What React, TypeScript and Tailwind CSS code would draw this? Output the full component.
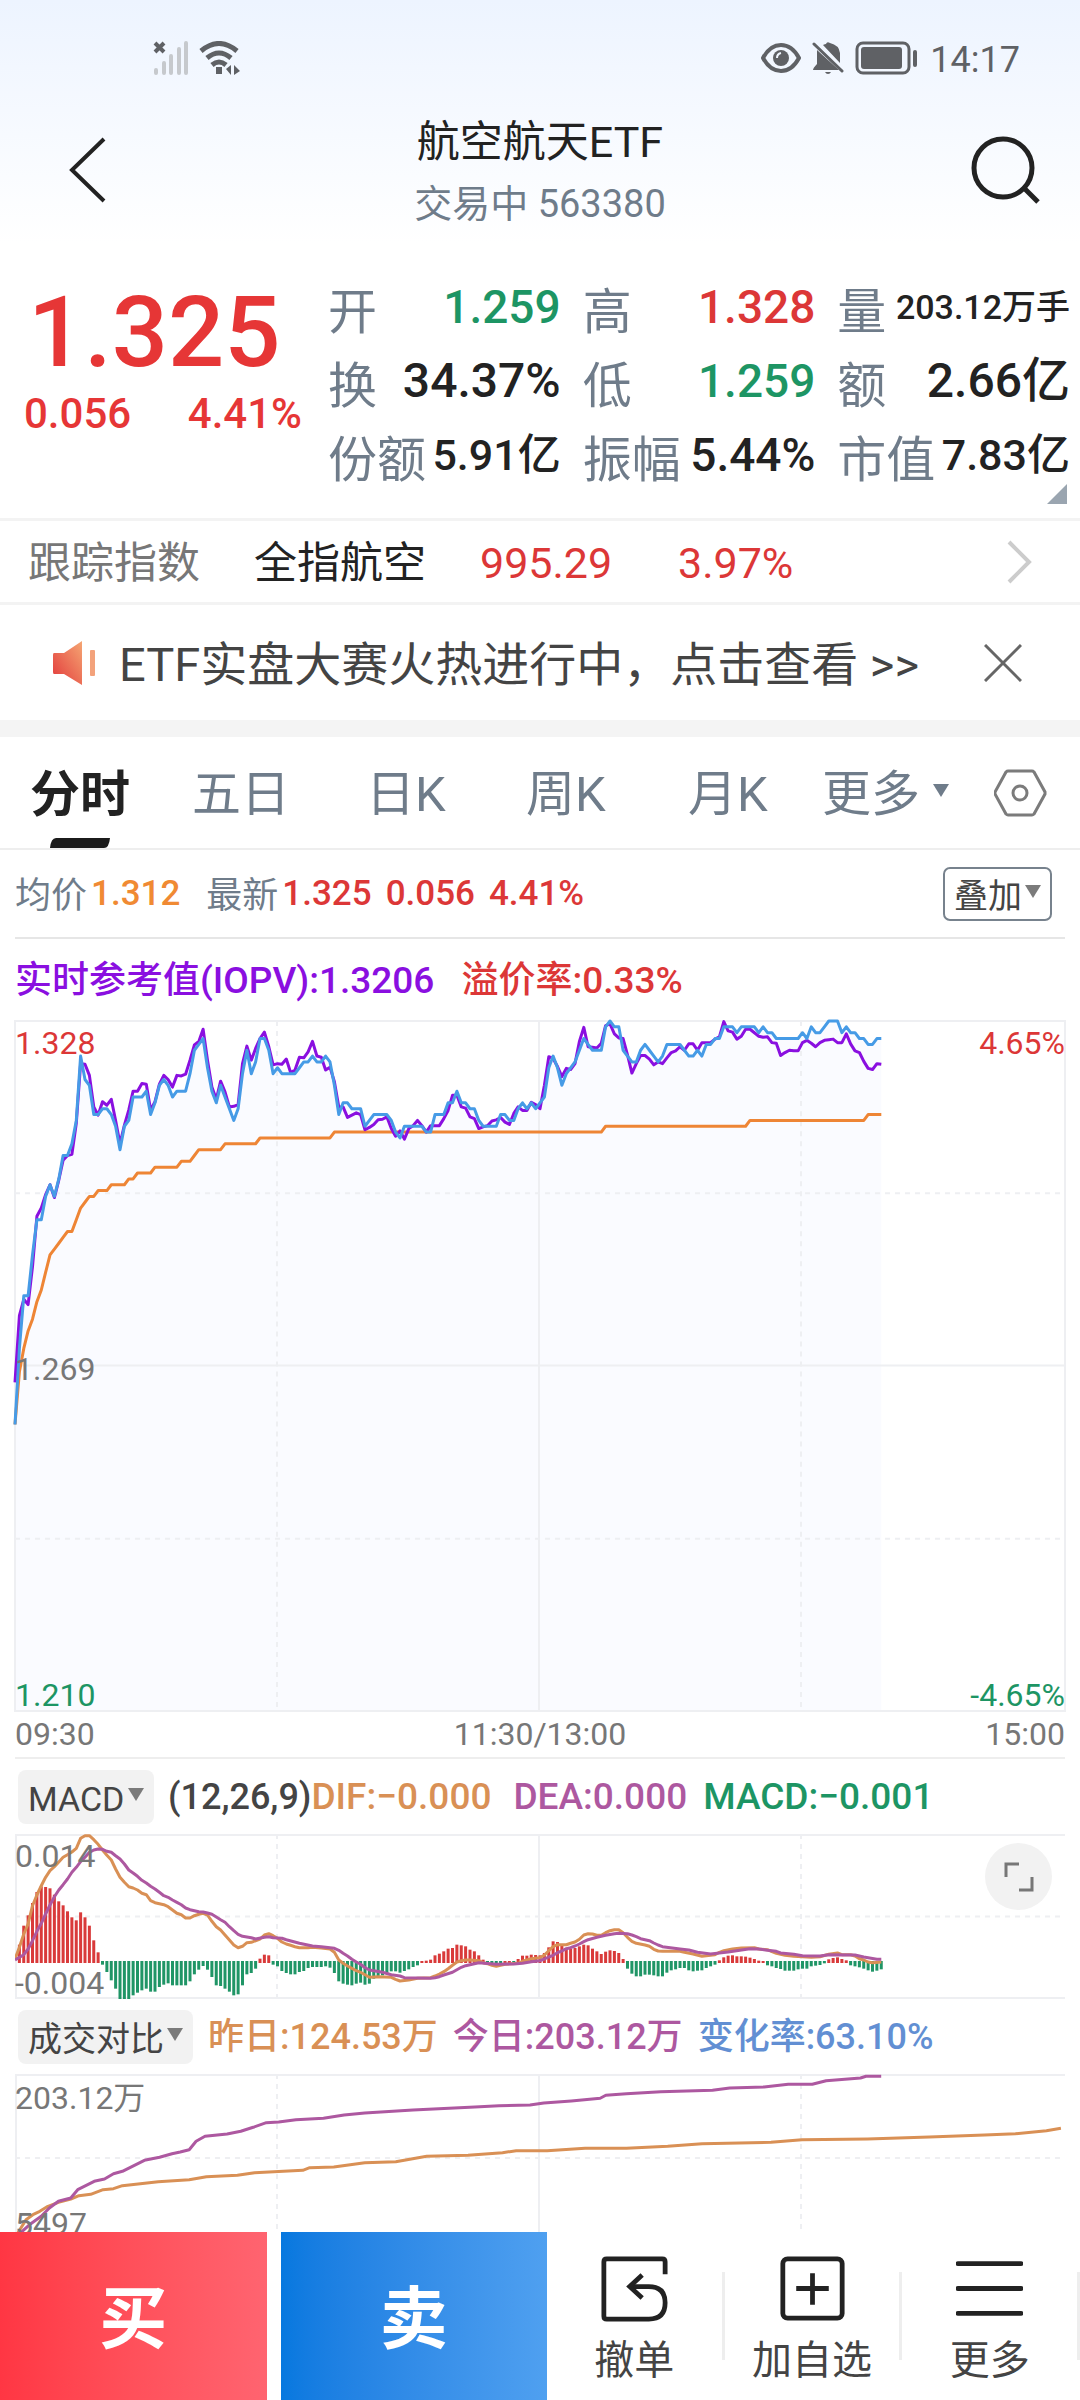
import type { ReactNode } from 'react'

type Point = [number, number]

const MINUTES = 240
const CHART_WIDTH = 1050

// Ticks of 0.001 below the day high (1.328), one entry per minute.
const priceTicks = [
  69, 56, 47, 47, 40, 34, 34, 30, 28, 30, 27, 23, 23, 21, 17, 6, 10, 11, 16, 16, 15, 15, 16, 18, 22, 18, 17, 13, 13, 13,
  12, 16, 14, 11, 10, 11, 13, 12, 12, 12, 9, 5, 4, 3, 8, 12, 14, 11, 13, 15, 17, 15, 9, 5, 9, 7, 3, 3, 5, 9, 8, 9, 9, 9,
  9, 8, 7, 7, 6, 7, 7, 6, 7, 11, 16, 14, 14, 15, 15, 15, 18, 17, 16, 16, 16, 16, 17, 19, 20, 18, 18, 18, 18, 18, 19, 19,
  16, 16, 16, 14, 14, 12, 14, 14, 15, 15, 17, 18, 18, 18, 18, 16, 16, 17, 17, 15, 14, 15, 14, 15, 14, 13, 8, 6, 8, 11,
  9, 8, 7, 5, 3, 4, 5, 5, 5, 1, 0, 1, 1, 5, 6, 7, 7, 5, 4, 5, 6, 7, 6, 4, 4, 4, 4, 5, 6, 6, 5, 6, 4, 4, 3, 3, 1, 1, 1,
  2, 1, 1, 1, 1, 2, 1, 2, 2, 3, 3, 3, 3, 3, 3, 2, 3, 1, 2, 2, 1, 0, 0, 0, 2, 1, 2, 2, 3, 3, 4, 4, 3, 3,
]

const iopvTicks = [
  61.8, 50.4, 47.6, 48.5, 42, 33.4, 32, 29.7, 28, 30.2, 27.2, 23.8, 23, 22.8, 17.5, 7.3, 7.4, 9.3, 14.7, 16.1, 13.8,
  14.4, 13.4, 17, 21, 17.8, 15.2, 12, 12, 10.7, 10.8, 15.2, 13.8, 10.8, 9.3, 10, 11.3, 9.3, 9.4, 9.1, 6.7, 4.1, 3.5,
  1.4, 6.7, 11.3, 13.4, 10.3, 12.1, 14.7, 14.6, 14.3, 7.3, 4.3, 6.7, 4.7, 3, 1.9, 4.4, 7.5, 7.3, 7.4, 6.5, 8.8, 8.4,
  6.2, 6.3, 5.3, 3.5, 6, 6.2, 8.4, 7.9, 10.4, 14.7, 14.7, 16.5, 16.1, 15.7, 16, 18.6, 18.2, 17.7, 16.9, 16.8, 16.4,
  18.4, 19.7, 18.8, 20.2, 18.4, 17.9, 17, 17.9, 19, 17.9, 17.9, 17.9, 16.7, 15.3, 12.7, 12.7, 14.7, 14.9, 16.4, 16.7,
  18.4, 18.1, 17.9, 17.1, 16.9, 16.5, 17.3, 17.7, 15.8, 14.7, 15.3, 15.3, 13.9, 14.3, 15, 11, 6.1, 6.4, 7.8, 9.5, 8.1,
  8.3, 7.3, 3.5, 1.1, 4.4, 4.5, 4.6, 3.8, 0.8, 0.5, 2.2, 2.9, 3, 5.8, 8.9, 7.3, 5.9, 5.9, 6.5, 7.5, 7, 7.3, 6.3, 5.4,
  5.1, 4.4, 5, 3.9, 3.9, 5, 3.7, 3.7, 3.7, 3.1, 2.7, 0.1, 1.7, 1.9, 3.1, 2.6, 1.4, 1.4, 2, 2.6, 2.8, 2.7, 3.7, 3.8,
  5.9, 5.4, 5, 5.1, 5.1, 3.7, 3.3, 3.8, 4.4, 3.7, 3.3, 3.2, 3.1, 3.7, 3.7, 2.2, 3.9, 5.1, 5.4, 6.9, 8.1, 8.3, 7.3, 7.4,
]

// [minute, ticks below the high]
const averageTicks: Point[] = [
  [0, 69], [1, 60], [2, 56], [3, 53], [4, 51], [5, 48], [6, 46], [7, 43], [8, 40], [9, 39], [10, 38], [11, 37],
  [12, 36], [13, 36], [14, 34], [15, 32], [16, 31], [17, 30], [18, 30], [19, 29], [21, 29], [22, 28], [25, 28],
  [26, 27], [27, 27], [28, 26], [31, 26], [32, 25], [37, 25], [38, 24], [40, 24], [41, 23], [42, 22], [47, 22],
  [48, 21], [55, 21], [56, 20], [72, 20], [73, 19], [134, 19], [135, 18], [167, 18], [168, 17], [194, 17], [195, 16],
  [198, 16],
]

// MACD bars from minute 1, positive above the zero line. Plot height is 495.
const macdBars = [
  55, 112, 143, 180, 213, 230, 228, 224, 205, 185, 173, 155, 137, 128, 152, 137, 112, 68, 32, -11, -33, -58, -83, -115,
  -118, -118, -103, -95, -88, -83, -92, -92, -78, -71, -67, -73, -73, -73, -73, -61, -40, -26, -15, -26, -48, -73, -75,
  -83, -92, -103, -100, -73, -40, -36, -23, 13, 25, 23, -11, -16, -30, -36, -40, -40, -33, -30, -21, -18, -18, -18, -16,
  -20, -36, -61, -68, -71, -73, -68, -65, -71, -68, -53, -48, -43, -38, -31, -31, -35, -30, -25, -18, -13, 6, 7, 10, 23,
  28, 35, 43, 45, 55, 53, 50, 40, 35, 23, 10, -4, -6, -7, -7, 6, 6, -4, 12, 22, 22, 25, 24, 23, 30, 47, 65, 63, 52, 45,
  43, 45, 50, 55, 53, 43, 35, 27, 34, 38, 36, 30, 12, -23, -38, -46, -46, -41, -41, -43, -46, -46, -35, -28, -25, -21,
  -21, -28, -31, -29, -28, -21, -16, -11, 8, 17, 22, 23, 20, 20, 19, 16, 12, 7, 6, -13, -16, -21, -24, -29, -29, -29,
  -25, -23, -23, -16, -14, -12, -7, 11, 15, 17, 12, 8, -13, -16, -19, -23, -28, -32, -29, -25,
]

const difLine: Point[] = [
  [0, 375], [1, 340], [2, 300], [3, 270], [4, 215], [5, 183], [6, 155], [7, 130], [8, 110], [9, 98], [10, 84], [11, 70],
  [12, 62], [13, 54], [14, 43], [15, 13], [16, 5], [17, 5], [18, 17], [19, 31], [20, 48], [21, 64], [22, 78], [23, 105],
  [24, 130], [25, 145], [26, 158], [27, 162], [28, 168], [29, 178], [30, 182], [31, 200], [32, 206], [34, 212],
  [35, 218], [36, 228], [37, 238], [38, 242], [39, 252], [40, 252], [41, 245], [42, 241], [43, 238], [44, 243],
  [45, 262], [46, 278], [47, 288], [48, 303], [49, 318], [50, 333], [51, 341], [52, 337], [53, 326], [54, 325],
  [56, 315], [57, 303], [58, 299], [59, 305], [60, 313], [61, 324], [62, 330], [63, 334], [64, 338], [65, 341],
  [67, 341], [68, 340], [70, 342], [72, 345], [73, 355], [74, 378], [75, 388], [76, 396], [77, 403], [78, 410],
  [79, 415], [80, 422], [81, 430], [83, 428], [86, 430], [87, 436], [88, 441], [90, 438], [92, 433], [95, 431],
  [96, 426], [97, 420], [98, 413], [99, 404], [100, 394], [101, 384], [102, 380], [103, 378], [104, 378], [106, 380],
  [107, 386], [108, 389], [109, 394], [110, 397], [111, 394], [112, 391], [115, 388], [116, 382], [117, 378],
  [118, 374], [120, 371], [121, 363], [122, 350], [123, 338], [124, 332], [126, 332], [127, 328], [128, 324],
  [129, 316], [130, 303], [131, 299], [132, 300], [133, 304], [134, 304], [135, 296], [136, 290], [137, 287],
  [138, 287], [139, 296], [140, 310], [141, 322], [142, 328], [144, 333], [145, 337], [146, 346], [147, 351],
  [148, 352], [152, 352], [153, 355], [155, 360], [157, 367], [160, 362], [161, 355], [162, 350], [164, 345],
  [166, 342], [169, 341], [170, 345], [172, 347], [173, 353], [174, 358], [176, 364], [178, 367], [182, 370],
  [184, 368], [186, 361], [188, 357], [189, 362], [191, 362], [192, 366], [193, 374], [194, 378], [195, 384],
  [196, 386], [198, 384],
]

const deaLine: Point[] = [
  [0, 378], [2, 362], [3, 345], [4, 320], [5, 292], [6, 268], [7, 240], [8, 213], [9, 188], [10, 168], [11, 152],
  [12, 135], [13, 115], [14, 100], [15, 83], [16, 70], [17, 55], [18, 48], [19, 45], [20, 46], [21, 52], [22, 55],
  [23, 65], [24, 75], [25, 90], [26, 108], [27, 117], [28, 127], [29, 139], [30, 147], [31, 157], [32, 165], [33, 175],
  [34, 185], [35, 190], [36, 198], [37, 205], [38, 212], [39, 222], [40, 227], [42, 233], [43, 234], [44, 237],
  [45, 241], [46, 249], [47, 257], [48, 265], [49, 278], [50, 290], [51, 301], [52, 307], [54, 311], [55, 315],
  [57, 310], [58, 308], [59, 311], [61, 313], [62, 317], [65, 328], [68, 336], [70, 338], [73, 343], [74, 349],
  [75, 358], [76, 366], [77, 376], [78, 384], [79, 391], [80, 401], [81, 408], [84, 415], [86, 422], [88, 426],
  [89, 431], [95, 433], [96, 431], [97, 428], [98, 423], [100, 415], [101, 407], [102, 400], [103, 395], [105, 389],
  [106, 386], [110, 391], [114, 390], [116, 388], [118, 383], [120, 380], [121, 375], [122, 369], [123, 364],
  [124, 356], [125, 351], [126, 344], [127, 341], [128, 336], [129, 330], [130, 323], [131, 317], [133, 310],
  [135, 304], [137, 299], [138, 298], [140, 299], [141, 303], [142, 308], [143, 314], [145, 320], [146, 327],
  [147, 333], [148, 338], [152, 345], [154, 348], [156, 355], [159, 360], [163, 354], [168, 344], [170, 345],
  [172, 349], [174, 352], [175, 357], [178, 361], [180, 365], [184, 366], [186, 362], [192, 363], [194, 369],
  [197, 376], [198, 376],
]

// Cumulative volume, x on a 0-1525 scale and y on a 0-504 scale.
const todayVolume: Point[] = [
  [4, 484], [23, 449], [38, 427], [50, 402], [63, 382], [81, 372], [91, 347], [115, 322], [130, 315], [143, 299],
  [156, 292], [188, 259], [210, 250], [228, 239], [240, 234], [253, 227], [263, 202], [276, 187], [308, 180],
  [328, 172], [346, 160], [365, 146], [383, 144], [408, 137], [448, 133], [478, 123], [508, 117], [578, 108],
  [668, 99], [703, 95], [748, 93], [768, 87], [808, 81], [850, 73], [858, 64], [888, 59], [938, 53], [1013, 49],
  [1038, 42], [1088, 39], [1123, 31], [1158, 31], [1178, 20], [1228, 12], [1236, 7], [1258, 7],
]

const yesterdayVolume: Point[] = [
  [2, 484], [16, 437], [26, 422], [36, 412], [46, 399], [63, 385], [81, 375], [93, 365], [110, 361], [128, 347],
  [143, 344], [156, 335], [208, 323], [253, 317], [278, 308], [323, 304], [348, 296], [418, 289], [428, 281],
  [463, 279], [508, 266], [553, 263], [598, 247], [658, 244], [708, 236], [728, 230], [773, 230], [828, 223],
  [888, 223], [948, 217], [998, 209], [1098, 205], [1143, 197], [1238, 195], [1328, 189], [1408, 183], [1453, 179],
  [1498, 170], [1519, 163],
]

const PRICE_HEIGHT = 689
const TICK = PRICE_HEIGHT / 118

function toPoints(data: Point[], xMax: number, yUnit: number) {
  return data.map(([x, y]) => `${((x / xMax) * CHART_WIDTH).toFixed(1)},${(y * yUnit).toFixed(1)}`).join(' ')
}

function perMinute(values: number[]): Point[] {
  return values.map((value, minute) => [minute, value])
}

const quotes = [
  { label: '开', value: '1.259', className: 'text-[46px] text-[#1d9564]' },
  { label: '高', value: '1.328', className: 'text-[46px] text-[#dc3737]' },
  { label: '量', value: '203.12万手', className: 'text-[34px] text-[#222]' },
  { label: '换', value: '34.37%', className: 'text-[48px] text-[#222]' },
  { label: '低', value: '1.259', className: 'text-[46px] text-[#1d9564]' },
  { label: '额', value: '2.66亿', className: 'text-[48px] text-[#222]' },
  { label: '份额', value: '5.91亿', className: 'text-[43px] text-[#222]' },
  { label: '振幅', value: '5.44%', className: 'text-[46px] text-[#222]' },
  { label: '市值', value: '7.83亿', className: 'text-[43px] text-[#222]' },
]

function StatusBar() {
  return (
    <div className="flex h-[116px] items-center justify-between pr-[60px] pl-[153px] text-[#5f6165]">
      <div className="flex items-center gap-[10px]">
        <svg width="36" height="34" viewBox="0 0 36 34" fill="none" strokeLinecap="round">
          <path d="M2 2l9 9M11 2l-9 9" stroke="#5f6165" strokeWidth="4" strokeLinecap="butt" />
          <path d="M3 29v3M11 22v10M18 15v17M26 8v24M33 2v30" stroke="#c6c9cd" strokeWidth="4" />
        </svg>
        <svg width="42" height="34" viewBox="0 0 42 34" fill="none" stroke="currentColor" strokeWidth="5">
          <path d="M2 10Q20-5 38 10M8 17q12-10 24 0M13 24q7-6 14 0" />
          <path d="M20 26v7" strokeWidth="6" />
          <path d="M32 24v10l-5-6zM35 34V24l6 6z" fill="currentColor" stroke="none" />
        </svg>
      </div>
      <div className="flex items-center gap-[11px]">
        <svg width="40" height="34" viewBox="0 0 40 34" fill="none" stroke="currentColor">
          <path d="M2 17Q9 4 20 4t18 13Q31 30 20 30T2 17z" strokeWidth="4" strokeLinejoin="round" />
          <circle cx="20" cy="17" r="8" fill="currentColor" stroke="none" />
          <path d="M16 17q0-4 4-5" stroke="#f0f6ff" strokeWidth="2" />
        </svg>
        <svg width="32" height="34" viewBox="0 0 32 34" fill="currentColor">
          <path d="M5 9l22 20H1q0-2 4-6zM11 4q2-1 3-1 1-3 4-1 9 2 10 10v10zM13 31h6q-1 2-3 2t-3-2z" />
          <path d="M2 3l28 27" stroke="currentColor" strokeWidth="3" strokeLinecap="round" />
        </svg>
        <svg width="64" height="34" viewBox="0 0 64 34" fill="none" stroke="currentColor">
          <rect x="2" y="2" width="52" height="30" rx="6" strokeWidth="3" />
          <rect x="6" y="6" width="41" height="22" rx="3" fill="currentColor" stroke="none" />
          <path d="M60 11v13" strokeWidth="4" strokeLinecap="round" />
        </svg>
        <span className="pt-1 text-[36px] leading-none">14:17</span>
      </div>
    </div>
  )
}

function Header() {
  return (
    <header className="flex h-[108px] items-center justify-between px-10">
      <button type="button" aria-label="返回" className="flex h-[100px] w-[72px] items-center justify-end">
        <svg width="44" height="68" viewBox="0 0 44 68" fill="none" stroke="#222" strokeWidth="4">
          <path d="M36 3L4 34l32 31" />
        </svg>
      </button>
      <div className="flex flex-col items-center gap-[20px] pt-1">
        <h1 className="text-[43px] leading-[44px] text-[#222]">航空航天ETF</h1>
        <p className="text-[38px] leading-[40px] text-[#6f7c8a]">交易中 563380</p>
      </div>
      <button type="button" aria-label="搜索" className="flex h-[100px] w-[72px] items-center justify-center">
        <svg width="72" height="68" viewBox="0 0 72 68" fill="none" stroke="#222" strokeWidth="5">
          <circle cx="35" cy="32" r="29" />
          <path d="M56 52l14 14" />
        </svg>
      </button>
    </header>
  )
}

function Quote() {
  return (
    <section className="relative flex h-[274px] pt-[28px] pr-[10px]">
      <div className="w-[328px] pl-[24px] font-medium text-[#e63636]">
        <div className="pl-[4px] text-[99px] leading-[120px]">1.325</div>
        <div className="flex w-[278px] justify-between text-[42px] leading-[44px]">
          <span>0.056</span>
          <span>4.41%</span>
        </div>
      </div>
      <dl className="grid flex-1 auto-rows-[74px] grid-cols-3 gap-x-[22px]">
        {quotes.map((item) => (
          <div key={item.label} className="flex items-center justify-between whitespace-nowrap">
            <dt className="pt-2 text-[49px] leading-[66px] text-[#6f7c8a]">{item.label}</dt>
            <dd className={`pb-1 leading-none font-medium ${item.className}`}>{item.value}</dd>
          </div>
        ))}
      </dl>
      <svg className="absolute right-[13px] bottom-[14px]" width="20" height="20" viewBox="0 0 20 20">
        <path d="M20 0v20H0z" fill="#9aa5b0" />
      </svg>
    </section>
  )
}

function TrackingIndex() {
  return (
    <a
      href="#index"
      className="flex h-[87px] items-center border-y-[3px] border-[#f3f3f3] pr-[48px] pl-[28px] text-[43px] text-[#dc3737]"
    >
      <span className="w-[226px] pt-1 text-[#777]">跟踪指数</span>
      <span className="w-[226px] pt-1 text-[#222]">全指航空</span>
      <span className="w-[198px] pt-1">995.29</span>
      <span className="pt-1">3.97%</span>
      <svg className="ml-auto" width="26" height="44" viewBox="0 0 26 44" fill="none" stroke="#ccc" strokeWidth="4">
        <path d="M3 2l20 20L3 42" />
      </svg>
    </a>
  )
}

function Banner() {
  return (
    <div className="flex h-[115px] items-center pr-[54px] pl-[52px]">
      <svg width="44" height="44" viewBox="0 0 44 44">
        <defs>
          <linearGradient id="horn" x1="0" y1="1" x2="1" y2="0">
            <stop offset="0" stopColor="#e2383a" />
            <stop offset="1" stopColor="#f5a673" />
          </linearGradient>
        </defs>
        <path d="M2 12h10L30 0v44L12 33H2q-1 0-1-2V14q0-2 1-2z" fill="url(#horn)" />
        <rect x="38" y="9" width="5" height="26" rx="1" fill="#f3a27b" />
      </svg>
      <a href="#contest" className="ml-[23px] pt-1 text-[47px] whitespace-nowrap text-[#444]">
        ETF实盘大赛火热进行中，点击查看 &gt;&gt;
      </a>
      <button type="button" aria-label="关闭" className="ml-auto p-1">
        <svg width="38" height="38" viewBox="0 0 38 38" fill="none" stroke="#666" strokeWidth="3">
          <path d="M1 1l36 36M37 1L1 37" />
        </svg>
      </button>
    </div>
  )
}

function Triangle({ className }: { className: string }) {
  return (
    <svg className={className} width="16" height="13" viewBox="0 0 16 13" fill="currentColor">
      <path d="M0 0h16L8 13z" />
    </svg>
  )
}

function Tabs() {
  return (
    <nav className="relative flex h-[113px] items-center border-b-2 border-[#eee] px-[30px] text-[49px] text-[#6f7c8a]">
      <button type="button" className="w-[162px] pt-1 text-left text-[50px] font-bold text-[#222]">
        分时
      </button>
      <button type="button" className="w-[174px] pt-1 text-left">五日</button>
      <button type="button" className="w-[160px] pt-1 text-left">日K</button>
      <button type="button" className="w-[162px] pt-1 text-left">周K</button>
      <button type="button" className="w-[134px] pt-1 text-left">月K</button>
      <div className="flex items-center">
        <select aria-label="更多周期" className="appearance-none pt-1 leading-[72px]">
          <option>更多</option>
        </select>
        <Triangle className="mb-1 ml-[12px]" />
      </div>
      <button type="button" aria-label="图表设置" className="ml-auto">
        <svg width="56" height="50" viewBox="0 0 56 50" fill="none" stroke="#7b7b7b" strokeWidth="3">
          <path d="M14 3h24q1 0 2 1l11 20v2L40 46q-1 1-2 1H14q-1 0-2-1L1 26v-2L12 4q1-1 2-1z" />
          <circle cx="26" cy="25" r="7" />
        </svg>
      </button>
      <svg className="absolute bottom-0 left-[50px]" width="60" height="10" viewBox="0 0 60 10">
        <path d="M6 0h54q-1 10-6 10H0q1-10 6-10z" fill="#1b1b1b" />
      </svg>
    </nav>
  )
}

function Averages() {
  return (
    <div className="mx-[15px] flex h-[89px] items-center border-b-2 border-[#e6e6e6] text-[35px] font-medium text-[#dc3737]">
      <span className="pt-1 text-[36px] font-normal text-[#6f7c8a]">均价</span>
      <span className="ml-[4px] text-[#f08a33]">1.312</span>
      <span className="ml-[26px] pt-1 text-[36px] font-normal text-[#6f7c8a]">最新</span>
      <span className="ml-[4px]">1.325</span>
      <span className="ml-[14px]">0.056</span>
      <span className="ml-[14px]">4.41%</span>
      <div className="mr-[13px] ml-auto flex h-[54px] items-center rounded-[7px] border-2 border-[#77828d] px-[9px] font-normal text-[#444]">
        <select aria-label="叠加" className="appearance-none pt-1 text-[34px] leading-[46px]">
          <option>叠加</option>
        </select>
        <Triangle className="mb-1 ml-[3px] text-[#7b7b7b]" />
      </div>
    </div>
  )
}

type ChartProps = {
  height: number
  className: string
  children: ReactNode
}

// Frame and grid lines shared by the two lower plots.
function Chart({ height, className, children }: ChartProps) {
  return (
    <svg className={`block w-full ${className}`} viewBox={`0 0 ${CHART_WIDTH} ${height}`} preserveAspectRatio="none" fill="none">
      <g stroke="#eeeff2" strokeWidth="2">
        <path d={`M1 0V${height}M524 0V${height}M0 1H${CHART_WIDTH}M0 ${height - 1}H${CHART_WIDTH}`} />
        <path d={`M262 0V${height}M786 0V${height}M0 ${height / 2}H${CHART_WIDTH}`} strokeDasharray="5 5" />
      </g>
      {children}
    </svg>
  )
}

function PriceChart() {
  const price = toPoints(perMinute(priceTicks), MINUTES, TICK)

  return (
    <div className="relative text-[32px] leading-none">
      <svg
        className="block h-[690px] w-full overflow-visible"
        viewBox={`0 0 ${CHART_WIDTH} ${PRICE_HEIGHT}`}
        preserveAspectRatio="none"
        fill="none"
      >
        <path d={`M${price.replaceAll(' ', 'L')}V${PRICE_HEIGHT}H0z`} fill="#fafbff" />
        <g stroke="#eeeff2" strokeWidth="2">
          <path d="M0 0H1050V689H0zM0 344H1050M524 0V689" />
          <path d="M262 0V689M786 0V689M0 172H1050M0 517H1050" strokeDasharray="5 5" />
        </g>
        <g strokeWidth="3" strokeLinejoin="round">
          <polyline points={toPoints(averageTicks, MINUTES, TICK)} stroke="#ee8535" />
          <polyline points={toPoints(perMinute(iopvTicks), MINUTES, TICK)} stroke="#8a0fe0" />
          <polyline points={price} stroke="#469be6" />
        </g>
      </svg>
      <span className="absolute top-[6px] left-0 text-[#dc3737]">1.328</span>
      <span className="absolute top-[6px] right-0 text-[#dc3737]">4.65%</span>
      <span className="absolute top-[332px] left-0 text-[#777]">1.269</span>
      <span className="absolute bottom-0 left-0 text-[#1d9564]">1.210</span>
      <span className="absolute right-0 bottom-0 text-[#1d9564]">-4.65%</span>
    </div>
  )
}

function IndicatorSelect({ name }: { name: string }) {
  return (
    <div className="flex h-[54px] items-center rounded-lg bg-[#f2f2f2] px-[10px] text-[#444]">
      <select aria-label="指标" className="appearance-none pt-1 text-[34px] leading-[46px] font-normal">
        <option>{name}</option>
      </select>
      <Triangle className="mb-1 ml-[3px] text-[#7b7b7b]" />
    </div>
  )
}

function MacdChart() {
  const step = CHART_WIDTH / MINUTES

  return (
    <div className="relative text-[32px] leading-none text-[#777]">
      <span className="absolute top-[6px] left-0">0.014</span>
      <span className="absolute bottom-0 left-0">-0.004</span>
      <Chart height={165} className="h-[165px]">
        {macdBars.map((value, index) => (
          <rect
            key={index}
            x={(index + 1) * step - 1.5}
            y={value > 0 ? 129 - value / 3 : 127}
            width={3}
            height={Math.abs(value) / 3}
            fill={value > 0 ? '#d93a3a' : '#1f9566'}
          />
        ))}
        <g strokeWidth="3" strokeLinejoin="round">
          <polyline points={toPoints(difLine, MINUTES, 1 / 3)} stroke="#d99055" />
          <polyline points={toPoints(deaLine, MINUTES, 1 / 3)} stroke="#ad58a0" />
        </g>
      </Chart>
      <button
        type="button"
        aria-label="全屏"
        className="absolute top-[9px] right-[13px] flex h-[67px] w-[67px] items-center justify-center rounded-full bg-[#f2f2f2]"
      >
        <svg width="30" height="30" viewBox="0 0 30 30" fill="none" stroke="#777" strokeWidth="3">
          <path d="M2 15V2h13M28 15v13H15" />
        </svg>
      </button>
    </div>
  )
}

function VolumeChart() {
  return (
    <div className="relative text-[32px] leading-none text-[#777]">
      <span className="absolute top-[8px] left-0">203.12万</span>
      <span className="absolute top-[134px] left-0">5497</span>
      <Chart height={168} className="h-[168px]">
        <g strokeWidth="3" strokeLinejoin="round">
          <polyline points={toPoints(yesterdayVolume, 1525, 1 / 3)} stroke="#d99055" />
          <polyline points={toPoints(todayVolume, 1525, 1 / 3)} stroke="#ad58a0" />
        </g>
      </Chart>
    </div>
  )
}

function ToolButton({ label, children }: { label: string; children: ReactNode }) {
  return (
    <button
      type="button"
      className="flex flex-1 flex-col items-center self-start pt-[23px] text-[40px] leading-[44px] text-[#444]"
    >
      <svg width="67" height="67" viewBox="0 0 70 70" fill="none" stroke="#222" strokeWidth="5">
        {children}
      </svg>
      <span className="mt-[17px]">{label}</span>
    </button>
  )
}

function BottomBar() {
  return (
    <footer className="flex h-[168px] shrink-0 bg-white">
      <button
        type="button"
        className="flex-1 bg-linear-to-r from-[#ff3643] to-[#ff6470] pt-2 text-[68px] font-bold text-white"
      >
        买
      </button>
      <button
        type="button"
        className="ml-3.5 flex-1 bg-linear-to-r from-[#0678df] to-[#4fa0f0] pt-2 text-[68px] font-bold text-white"
      >
        卖
      </button>
      <div className="flex flex-2 items-center">
        <ToolButton label="撤单">
          <path d="M67 20V7q0-3-3-3H6q-3 0-3 3v57q0 3 3 3h44q17 0 17-17T50 33H32" />
          <path d="M43 21L30 33l13 12" />
        </ToolButton>
        <div className="h-[88px] w-[3px] bg-[#eee]" />
        <ToolButton label="加自选">
          <rect x="4" y="4" width="62" height="62" rx="5" />
          <path d="M35 19v33M18 35h34" />
        </ToolButton>
        <div className="h-[88px] w-[3px] bg-[#eee]" />
        <ToolButton label="更多">
          <path d="M2 9h66M2 35h66M2 61h66" strokeLinecap="round" />
        </ToolButton>
        <div className="h-[88px] w-[3px] bg-[#eee]" />
      </div>
    </footer>
  )
}

export default function App() {
  return (
    <div className="flex h-screen flex-col bg-white font-['Roboto','Noto_Sans_CJK_SC',sans-serif] leading-none">
      <main className="min-h-0 flex-1 overflow-y-auto [scrollbar-width:none]">
        <div className="bg-linear-to-b from-[#edf4ff] to-white pb-[20px]">
          <StatusBar />
          <Header />
        </div>
        <Quote />
        <TrackingIndex />
        <Banner />
        <div className="h-[17px] bg-[#f4f4f4]" />
        <Tabs />
        <Averages />

        <div className="mx-[15px]">
          <div className="flex h-[82px] items-center gap-[27px] text-[37px] font-medium">
            <span className="text-[#8a0fe0]">实时参考值(IOPV):1.3206</span>
            <span className="text-[#dc3737]">溢价率:0.33%</span>
          </div>
          <PriceChart />
          <div className="flex h-[48px] items-center justify-between border-b-2 border-[#eee] text-[32px] text-[#777]">
            <span className="flex-1">09:30</span>
            <span>11:30/13:00</span>
            <span className="flex-1 text-right">15:00</span>
          </div>

          <div className="flex h-[75px] items-center pl-[3px] text-[37px] font-medium">
            <IndicatorSelect name="MACD" />
            <span className="ml-[14px] text-[36px] text-[#444]">(12,26,9)</span>
            <span className="text-[#d99055]">DIF:−0.000</span>
            <span className="ml-[22px] text-[#ad58a0]">DEA:0.000</span>
            <span className="ml-[16px] text-[#1d9564]">MACD:−0.001</span>
          </div>
          <MacdChart />

          <div className="flex h-[75px] items-center gap-[15px] pl-[3px] text-[36px] font-medium">
            <IndicatorSelect name="成交对比" />
            <span className="text-[#d99055]">昨日:124.53万</span>
            <span className="text-[#ad58a0]">今日:203.12万</span>
            <span className="text-[#628fd3]">变化率:63.10%</span>
          </div>
          <VolumeChart />
        </div>
      </main>
      <BottomBar />
    </div>
  )
}
